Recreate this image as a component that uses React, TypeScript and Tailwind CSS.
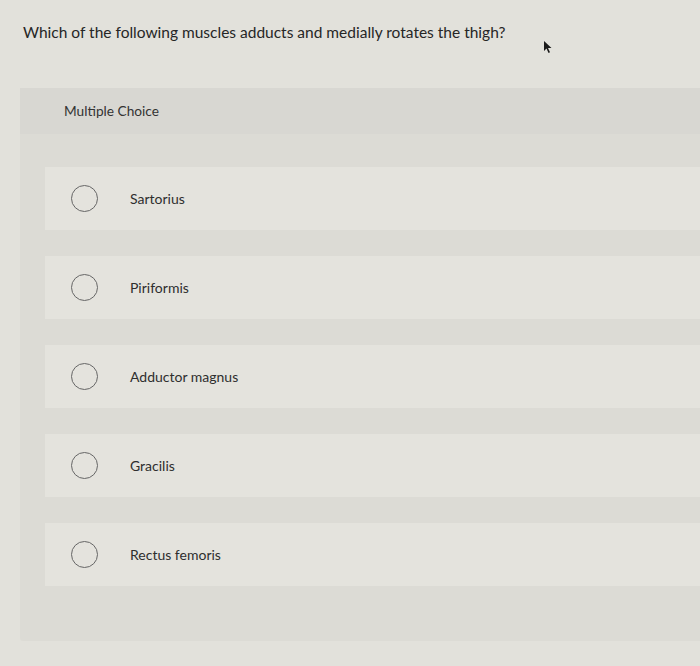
import React from 'react';

const choices = ['Sartorius', 'Piriformis', 'Adductor magnus', 'Gracilis', 'Rectus femoris'];

function Cursor() {
  return (
    <svg className="absolute left-[543px] top-[40px]" width="10" height="14" viewBox="0 0 10 14">
      <path d="M1 1 L1 11 L3.5 8.5 L5.5 13 L7 12.3 L5 8 L8.5 8 Z" fill="#1a1a1a" />
    </svg>
  );
}

export default function App() {
  return (
    <div
      className="relative w-[700px] h-[666px] overflow-hidden bg-[#e2e1db] text-[#262626]"
      style={{ fontFamily: 'Lato, "Open Sans", sans-serif' }}
    >
      <Cursor />
      <div className="pl-[23px] pt-[22px] h-[88px]">
        <p className="text-[15.5px] leading-[20px]">
          Which of the following muscles adducts and medially rotates the thigh?
        </p>
      </div>

      <div className="ml-[20px] w-[700px] bg-[#dcdbd5] rounded-tl-[3px] rounded-bl-[3px]">
        <div className="h-[46px] bg-[#d8d7d2] flex items-center pl-[44px]">
          <span className="text-[13.7px] text-[#333]">Multiple Choice</span>
        </div>
        <div className="flex flex-col gap-[26px] pl-[25px] pt-[33px] pb-[55px]">
          {choices.map((c) => (
            <div key={c} className="h-[63px] bg-[#e4e3dd] flex items-center">
              <span className="ml-[26px] w-[27px] h-[27px] rounded-full border-[1.5px] border-[#666]" />
              <span className="ml-[32px] text-[14px] text-[#2e2e2e]">{c}</span>
            </div>
          ))}
        </div>
      </div>
    </div>
  );
}
